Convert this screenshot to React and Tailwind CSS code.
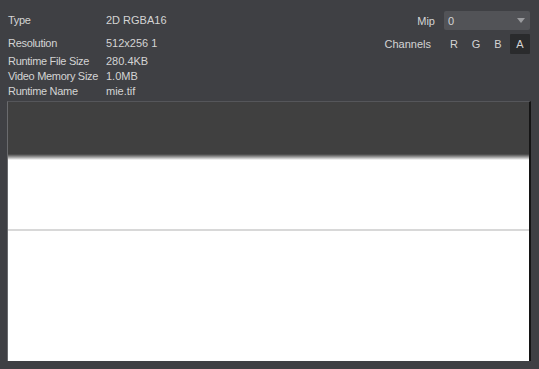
import React from "react";

const info = [
  ["Type", "2D RGBA16", "h-[23px]"],
  ["Resolution", "512x256 1", "h-[18px]"],
  ["Runtime File Size", "280.4KB", "h-[15px]"],
  ["Video Memory Size", "1.0MB", "h-[15px]"],
  ["Runtime Name", "mie.tif", "h-[15px]"],
];

export default function App() {
  return (
    <div
      className="w-[539px] h-[369px] bg-[#3f4044] text-[#d4d4d4] text-[11px] leading-[14px] flex flex-col overflow-hidden"
      style={{ fontFamily: "'Liberation Sans', Arial, sans-serif" }}
    >
      <div className="flex h-[101px] pl-[8px] pr-[9px]">
        {/* PROPERTIES */}
        <div className="flex flex-col pt-[13px]">
          {info.map(([k, v, h]) => (
            <div key={k} className={`flex items-start whitespace-nowrap ${h}`}>
              <span className="w-[98px] tracking-[-0.3px]">{k}</span>
              <span>{v}</span>
            </div>
          ))}
        </div>

        {/* MIP / CHANNELS */}
        <div className="ml-auto flex flex-col items-end pt-[11px] gap-[4px]">
          <div className="flex items-center">
            <span className="mr-[9px]">Mip</span>
            <div className="w-[86px] h-[19px] bg-[#525357] rounded-[2px] flex items-center pl-[4px] pr-[5px]">
              <span>0</span>
              <svg className="ml-auto" width="8" height="5" viewBox="0 0 8 5">
                <path d="M0 0h8L4 5z" fill="#9a9b9e" />
              </svg>
            </div>
          </div>
          <div className="flex items-center">
            <span className="mr-[12px]">Channels</span>
            <span className="w-[22px] text-center">R</span>
            <span className="w-[22px] text-center">G</span>
            <span className="w-[22px] text-center">B</span>
            <span className="w-[20px] h-[20px] ml-[1px] flex items-center justify-center bg-[#2a2b2d] rounded-[1px]">A</span>
          </div>
        </div>
      </div>

      {/* PREVIEW */}
      <div className="ml-[7px] mr-[8px] h-[260px] border-l border-[#6a6b6e] border-t border-t-[#55565a] border-r-2 border-r-[#141414] bg-white flex flex-col">
        <div className="h-[52px] bg-[#404040]" />
        <div className="h-[6px] bg-gradient-to-b from-[#404040] to-white" />
        <div className="h-[69px]" />
        <div className="h-[2px] bg-[#d8d8d8]" />
      </div>
    </div>
  );
}
